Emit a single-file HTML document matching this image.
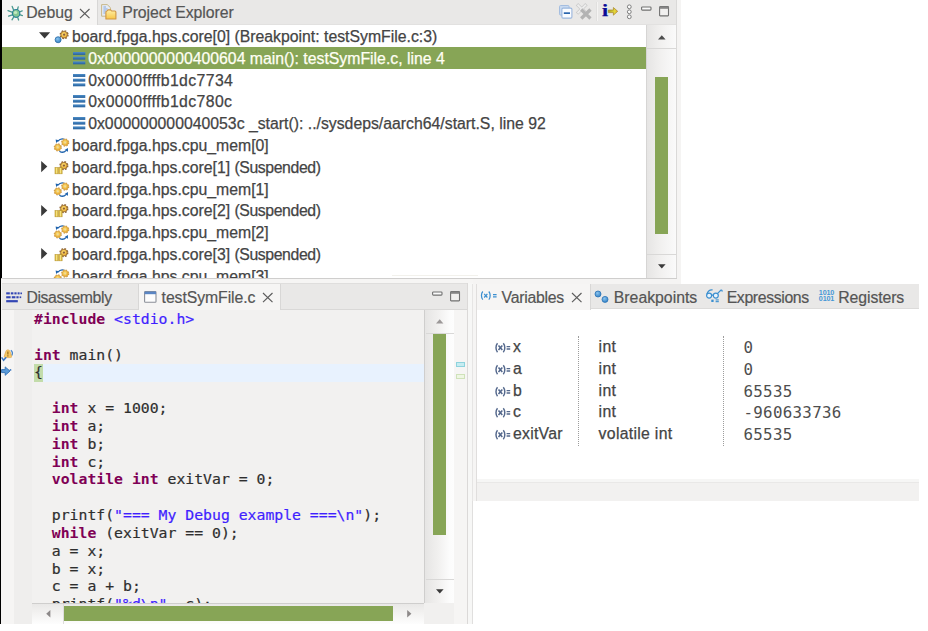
<!DOCTYPE html>
<html>
<head>
<meta charset="utf-8">
<title>Debug</title>
<style>
html,body{margin:0;padding:0;background:#fff;}
body{width:928px;height:631px;position:relative;overflow:hidden;font-family:"Liberation Sans",sans-serif;font-size:15.8px;color:#444;}
.abs,.abs>div{position:absolute;}
.abs{left:0;top:0;}
div{box-sizing:border-box;}
.t{position:absolute;white-space:pre;line-height:20px;height:20px;-webkit-text-stroke:0.25px currentColor;}
.tab{color:#555;-webkit-text-stroke:0.2px #555;}
.sel{color:#fffff4;}
.code{position:absolute;left:34px;white-space:pre;font-family:"DejaVu Sans Mono","Liberation Mono",monospace;font-size:14.79px;line-height:17.83px;height:17.83px;color:#2e2e2e;-webkit-text-stroke:0.2px #2e2e2e;}
.k{color:#7f0055;font-weight:bold;-webkit-text-stroke:0;}
.s{color:#3f1fff;-webkit-text-stroke:0.2px #3f1fff;}
.val{position:absolute;left:743.5px;white-space:pre;font-family:"DejaVu Sans Mono","Liberation Mono",monospace;font-size:15.8px;letter-spacing:0.3px;line-height:20px;height:20px;color:#4e4e4e;}
svg{position:absolute;overflow:visible;}
</style>
</head>
<body>

<svg width="0" height="0" style="left:0;top:0">
<defs>
<linearGradient id="gBar" x1="0" y1="0" x2="0" y2="1"><stop offset="0" stop-color="#4f8fc9"/><stop offset="1" stop-color="#245f9c"/></linearGradient>
<radialGradient id="gGear" cx="0.45" cy="0.4" r="0.6"><stop offset="0" stop-color="#ffe37a"/><stop offset="1" stop-color="#e9a92c"/></radialGradient>
<radialGradient id="gBlue" cx="0.4" cy="0.35" r="0.7"><stop offset="0" stop-color="#8cc4ee"/><stop offset="1" stop-color="#2f7fc4"/></radialGradient>
<linearGradient id="gPause" x1="0" y1="0" x2="1" y2="0"><stop offset="0" stop-color="#d2ad2f"/><stop offset="0.5" stop-color="#f7e484"/><stop offset="1" stop-color="#d2ad2f"/></linearGradient>
<linearGradient id="gFold" x1="0" y1="0" x2="0" y2="1"><stop offset="0" stop-color="#fff0a8"/><stop offset="1" stop-color="#f7c648"/></linearGradient>
<!-- stack frame: three bars, 12.3 x 12 -->
<g id="frame"><rect x="0" y="0" width="12.3" height="2.9" fill="url(#gBar)"/><rect x="0" y="4.7" width="12.3" height="2.9" fill="url(#gBar)"/><rect x="0" y="9.4" width="12.3" height="2.9" fill="url(#gBar)"/></g>
<!-- gear -->
<g id="gear"><circle r="3.85" fill="none" stroke="#8b6233" stroke-width="1.4" stroke-dasharray="1.7 1.324"/>
<circle r="3.3" fill="url(#gGear)" stroke="#94672f" stroke-width="0.8"/><circle r="1.15" fill="#8c5f3c"/></g>
<g id="gear2"><circle r="3.45" fill="none" stroke="#cf9c4a" stroke-width="1.3" stroke-dasharray="1.5 1.21"/>
<circle r="3.05" fill="url(#gGear)" stroke="#d4a043" stroke-width="0.7"/><circle r="0.9" fill="#e9d9a8"/></g>
<!-- core running (thread w/ blue dot); origin = (ix, row centre) -->
<g id="core0"><use href="#gear" x="10.1" y="-1.3"/><circle cx="4.1" cy="3.75" r="3" fill="url(#gBlue)" stroke="#3574ad" stroke-width="0.9"/></g>
<!-- core suspended -->
<g id="coreS"><use href="#gear" x="9.9" y="-1.4"/><rect x="1" y="0.6" width="3.2" height="6.2" fill="url(#gPause)" stroke="#b9962c" stroke-width="0.6"/><rect x="4.9" y="0.6" width="3.2" height="6.2" fill="url(#gPause)" stroke="#b9962c" stroke-width="0.6"/></g>
<!-- cpu mem: two gears with blue arrows -->
<g id="mem"><path d="M3.6 -3.6 Q7 -7.4 10.4 -5.6" fill="none" stroke="#1f63ad" stroke-width="1.3"/><path d="M1.6 -5.4 L5 -4.8 L2.2 -1.9Z" fill="#1f63ad"/>
<path d="M5.4 6.2 Q9 8.6 12 5.6" fill="none" stroke="#1f63ad" stroke-width="1.3"/><path d="M13.9 3 L14 6.8 L10.6 5Z" fill="#1f63ad"/>
<use href="#gear2" x="3.8" y="2.4"/><use href="#gear2" x="11.2" y="-2.4"/></g>
<!-- close x -->
<g id="cx"><path d="M0 0L9.5 9.2M9.5 0L0 9.2" stroke="#5c5c5c" stroke-width="1.15" fill="none"/></g>
<!-- minimize / maximize -->
<g id="mini"><rect x="0.6" y="1.0" width="9.4" height="3.1" rx="0.8" fill="#fafafa" stroke="#707070" stroke-width="1.1"/></g>
<g id="maxi"><rect x="0.6" y="0.6" width="8.9" height="9.3" rx="0.6" fill="#f1f0ef" stroke="#707070" stroke-width="1.1"/><rect x="0.6" y="0.6" width="8.9" height="2.2" fill="#858585"/></g>
<!-- variable icon (x)= -->
<g id="var"><path d="M2.5 0.2C0.5 2.6 0.5 6.8 2.5 9.2M8.3 0.2C10.3 2.6 10.3 6.8 8.3 9.2" fill="none" stroke="#54688c" stroke-width="1.45"/><path d="M3.5 2.5L7.3 7M7.3 2.5L3.5 7" stroke="#54688c" stroke-width="1.6"/><path d="M11.6 3.6H15.2M11.6 6H15.2" stroke="#54688c" stroke-width="1.3"/></g>
</defs></svg>

<div class="abs" id="top">
<div style="left:0;top:0;width:680.7px;height:283.5px;background:#f5f4f3;"></div>
<div style="left:2px;top:0;width:674.4px;height:24.5px;background:#e9e8e7;"></div>
<div style="left:2px;top:0;width:95.5px;height:25px;background:#f6f5f4;border-right:1px solid #d8d7d6;"></div>
<div style="left:97.5px;top:23.8px;width:579px;height:1px;background:#e2e1e0;"></div>
<div style="left:2px;top:25px;width:644.2px;height:253px;background:#fff;"></div>
<div style="left:2px;top:47px;width:644.2px;height:21.7px;background:#87a556;"></div>
<div style="left:646.2px;top:25px;width:30.2px;height:253px;background:linear-gradient(90deg,#e6e5e4 0%,#f1f0ef 45%,#fafafa 100%);border-left:1px solid #d6d5d4;"></div>
<div style="left:647px;top:48px;width:29px;height:1px;background:#d9d8d7;"></div>
<div style="left:647px;top:254px;width:29px;height:1px;background:#d9d8d7;"></div>
<div style="left:655.1px;top:77px;width:12.9px;height:157px;background:#87a556;"></div>
<div style="left:676px;top:0;width:1px;height:279px;background:#dad9d8;"></div>
<div style="left:0;top:277.8px;width:677px;height:1px;background:#cfcecd;"></div>
<div style="left:392px;top:275px;width:86px;height:1px;background:#f2f1ec;"></div>
</div>
<div class="t tab" style="left:26.2px;top:3.23px;">Debug</div>
<div class="t tab" style="left:122.2px;top:3.23px;letter-spacing:-0.06px;">Project Explorer</div>
<svg style="left:80.3px;top:8.7px" width="10" height="10"><use href="#cx"/></svg>
<svg style="left:6.5px;top:5px" width="16" height="16" viewBox="0 0 16 16">
<g stroke="#4a9990" stroke-width="1.3" stroke-linecap="round" fill="none">
<path d="M6.8 5.4L5.2 1.4M10.4 5L11.2 1.8M5.6 7.4L1 5.6M12.4 7L15.2 5.8M5.4 9.8L1.6 11.2M12.6 9.6L15.4 10.6M6.8 11.8L5 14.8M10.6 12L11.6 15"/></g>
<ellipse cx="9.1" cy="8.4" rx="3.7" ry="3.9" fill="#84c793" stroke="#2c8298" stroke-width="1.2"/>
<ellipse cx="8.5" cy="7.4" rx="1.7" ry="1.5" fill="#c3e8c2"/>
</svg>
<svg style="left:101px;top:4.2px" width="16" height="16" viewBox="0 0 16 16">
<path d="M0.6 0.6H6.2L9.4 3.6V12.2H0.6Z" fill="#e4ebf6" stroke="#c9b98a" stroke-width="1"/>
<path d="M2.4 3H5M2.4 5H6.6M2.4 7H5.6M2.4 9H4.6" stroke="#86a7dc" stroke-width="1"/>
<path d="M4.9 15V8.2Q4.9 7 6 7L7 5.9H9.6L10.6 7H13.8Q14.9 7 14.9 8.2V15Z" fill="url(#gFold)" stroke="#cf9544" stroke-width="1.1" stroke-linejoin="round"/>
</svg>
<svg style="left:559px;top:4.6px" width="14" height="14" viewBox="0 0 14 14">
<rect x="0.5" y="0.5" width="9.6" height="9.6" rx="1.2" fill="#c9daf0" stroke="#a4bde0" stroke-width="1"/>
<rect x="2.9" y="3.1" width="10" height="10" rx="1.2" fill="#fafcff" stroke="#9ab6dd" stroke-width="1.1"/>
<rect x="4.8" y="7.3" width="6.2" height="1.7" fill="#2b66ad"/>
</svg>
<svg style="left:575.8px;top:3.4px" width="16" height="16" viewBox="0 0 16 16">
<path d="M2.2 2.4L9.3 9.4M9.3 2.4L2.2 9.4" stroke="#cbcbcb" stroke-width="3.4" stroke-linecap="square"/>
<path d="M2.2 2.4L9.3 9.4M9.3 2.4L2.2 9.4" stroke="#ededed" stroke-width="1.9" stroke-linecap="square"/>
<path d="M6.4 7.7L13.3 14.4M13.3 7.7L6.4 14.4" stroke="#b3b3b3" stroke-width="3.3" stroke-linecap="square"/>
</svg>
<div style="position:absolute;left:597.3px;top:2px;width:1px;height:19px;background:#f5f4f3;"></div>
<div style="position:absolute;left:596.3px;top:2px;width:1px;height:19px;background:#e1e0df;"></div>
<div class="t" style="left:602.4px;top:0.9px;font-family:'Liberation Serif',serif;font-weight:bold;font-size:16.9px;color:#0a0a96;line-height:20px;transform:scaleX(1.3);transform-origin:0 0;">i</div>
<svg style="left:607.8px;top:6.6px" width="10" height="9" viewBox="0 0 10 9">
<defs><linearGradient id="gArr" x1="0" y1="0" x2="1" y2="0"><stop offset="0" stop-color="#a9a720"/><stop offset="0.7" stop-color="#e6d93a"/><stop offset="1" stop-color="#d9a02c"/></linearGradient></defs>
<path d="M0.3 3H5.4V0.5L9.7 4.3L5.4 8.2V5.6H0.3Z" fill="url(#gArr)" stroke="#a8852a" stroke-width="0.7" stroke-linejoin="round"/></svg>
<svg style="left:625.5px;top:3.8px" width="7" height="16" viewBox="0 0 7 16">
<g fill="#fcfcfc" stroke="#7d7d7d" stroke-width="1"><circle cx="3.3" cy="2.8" r="1.9"/><circle cx="3.3" cy="7.8" r="1.9"/><circle cx="3.3" cy="12.8" r="1.9"/></g></svg>
<svg style="left:640.9px;top:6px" width="11" height="5"><use href="#mini"/></svg>
<svg style="left:659px;top:6px" width="11" height="11"><use href="#maxi"/></svg>
<svg style="left:657.6px;top:34.9px" width="8" height="5" viewBox="0 0 8 5"><path d="M0 4.6L3.8 0.2L7.6 4.6Z" fill="#4d4d4d"/></svg>
<svg style="left:657.7px;top:263.6px" width="8" height="5" viewBox="0 0 8 5"><path d="M0 0.2L3.8 4.6L7.6 0.2Z" fill="#3a3a3a"/></svg>
<div style="position:absolute;left:2px;top:25px;width:644.2px;height:252.8px;overflow:hidden;">
<div class="t " style="left:70.0px;top:1.98px;">board.fpga.hps.core[0] (Breakpoint: testSymFile.c:3)</div>
<svg style="left:52.2px;top:10.90px" width="1" height="1"><use href="#core0"/></svg>
<svg style="left:36.8px;top:7.30px" width="12" height="7" viewBox="0 0 12 7"><path d="M0 0.2H11.2L5.6 6.6Z" fill="#3a3a3a"/></svg>
<div class="t sel" style="left:86.2px;top:23.78px;">0x0000000000400604 main(): testSymFile.c, line 4</div>
<svg style="left:70.5px;top:26.80px" width="13" height="13"><use href="#frame"/></svg>
<div class="t " style="left:86.2px;top:45.58px;letter-spacing:0.4px;">0x0000ffffb1dc7734</div>
<svg style="left:70.5px;top:48.60px" width="13" height="13"><use href="#frame"/></svg>
<div class="t " style="left:86.2px;top:67.38px;letter-spacing:0.4px;">0x0000ffffb1dc780c</div>
<svg style="left:70.5px;top:70.40px" width="13" height="13"><use href="#frame"/></svg>
<div class="t " style="left:86.2px;top:89.18px;">0x000000000040053c _start(): ../sysdeps/aarch64/start.S, line 92</div>
<svg style="left:70.5px;top:92.20px" width="13" height="13"><use href="#frame"/></svg>
<div class="t " style="left:70.0px;top:110.98px;">board.fpga.hps.cpu_mem[0]</div>
<svg style="left:52.2px;top:119.90px" width="1" height="1"><use href="#mem"/></svg>
<div class="t " style="left:70.0px;top:132.78px;">board.fpga.hps.core[1] <span style="letter-spacing:-0.4px">(Suspended)</span></div>
<svg style="left:52.2px;top:141.70px" width="1" height="1"><use href="#coreS"/></svg>
<svg style="left:39.2px;top:136.00px" width="7" height="12" viewBox="0 0 7 12"><path d="M0.2 0L6.3 5.6L0.2 11.2Z" fill="#3a3a3a"/></svg>
<div class="t " style="left:70.0px;top:154.58px;">board.fpga.hps.cpu_mem[1]</div>
<svg style="left:52.2px;top:163.50px" width="1" height="1"><use href="#mem"/></svg>
<div class="t " style="left:70.0px;top:176.38px;">board.fpga.hps.core[2] <span style="letter-spacing:-0.4px">(Suspended)</span></div>
<svg style="left:52.2px;top:185.30px" width="1" height="1"><use href="#coreS"/></svg>
<svg style="left:39.2px;top:179.60px" width="7" height="12" viewBox="0 0 7 12"><path d="M0.2 0L6.3 5.6L0.2 11.2Z" fill="#3a3a3a"/></svg>
<div class="t " style="left:70.0px;top:198.18px;">board.fpga.hps.cpu_mem[2]</div>
<svg style="left:52.2px;top:207.10px" width="1" height="1"><use href="#mem"/></svg>
<div class="t " style="left:70.0px;top:219.98px;">board.fpga.hps.core[3] <span style="letter-spacing:-0.4px">(Suspended)</span></div>
<svg style="left:52.2px;top:228.90px" width="1" height="1"><use href="#coreS"/></svg>
<svg style="left:39.2px;top:223.20px" width="7" height="12" viewBox="0 0 7 12"><path d="M0.2 0L6.3 5.6L0.2 11.2Z" fill="#3a3a3a"/></svg>
<div class="t " style="left:70.0px;top:241.78px;">board.fpga.hps.cpu_mem[3]</div>
<svg style="left:52.2px;top:250.70px" width="1" height="1"><use href="#mem"/></svg>
</div>
<div class="abs" id="bl">
<div style="left:0;top:278.6px;width:472.7px;height:345px;background:#f6f5f4;"></div>
<div style="left:2px;top:283px;width:465.6px;height:26.4px;background:#e9e8e7;"></div>
<div style="left:2px;top:283px;width:465.6px;height:1px;background:#dfdedd;"></div>
<div style="left:137.5px;top:283.6px;width:143.5px;height:26px;background:#f6f5f4;border-left:1px solid #d8d7d6;border-right:1px solid #d8d7d6;"></div>
<div style="left:2px;top:308.6px;width:135.5px;height:1px;background:#d9d8d7;"></div>
<div style="left:281px;top:308.6px;width:186.6px;height:1px;background:#d9d8d7;"></div>
<div style="left:2px;top:309.6px;width:422.4px;height:293.6px;background:#f2f1f0;"></div>
<div style="left:2px;top:309.6px;width:12px;height:314px;background:#f6f5f4;"></div>
<div style="left:14px;top:309.6px;width:18px;height:314px;background:#efeeed;"></div>
<div style="left:34px;top:363.8px;width:390.4px;height:17.8px;background:#e8f2fe;"></div>
<div style="left:33.8px;top:363.8px;width:9.2px;height:17.8px;background:#c3dcaa;"></div>
<div style="left:424.2px;top:309.6px;width:29.8px;height:293.6px;background:linear-gradient(90deg,#e6e5e4 0%,#f1f0ef 45%,#fcfcfc 85%,#fdfdfd 100%);border-left:1.3px solid #cfcecd;"></div>
<div style="left:425.5px;top:333px;width:28.5px;height:1px;background:#d9d8d7;"></div>
<div style="left:425.5px;top:579.3px;width:28.5px;height:1px;background:#d9d8d7;"></div>
<div style="left:433.3px;top:334px;width:12.8px;height:200.5px;background:#87a556;"></div>
<div style="left:456px;top:361.8px;width:9.2px;height:4.9px;background:#c6ecf1;border:1px solid #8ed3dd;"></div>
<div style="left:456px;top:374.4px;width:9.2px;height:4.9px;background:#eef6e3;border:1px solid #cfe2b9;"></div>
<div style="left:32px;top:603.2px;width:392.4px;height:20.4px;background:linear-gradient(180deg,#e9e8e7 0%,#f3f2f1 45%,#fdfdfd 100%);border-top:1px solid #cfcecd;"></div>
<div style="left:63px;top:604px;width:1px;height:19.6px;background:#dddcdb;"></div>
<div style="left:63.6px;top:606.2px;width:329.2px;height:15.2px;background:#87a556;"></div>
<div style="left:424.4px;top:603.2px;width:29.6px;height:20.4px;background:#f1f0ef;"></div>
<div style="left:467.4px;top:283px;width:1px;height:340.6px;background:#dbd9d8;"></div>
<div style="left:468.4px;top:283px;width:4.3px;height:340.6px;background:#f7f7f6;"></div>
<div style="left:471.7px;top:501px;width:1px;height:122.6px;background:#e0dfde;"></div>
</div>
<svg style="left:435.9px;top:318.9px" width="8" height="5" viewBox="0 0 8 5"><path d="M0 4.4L3.7 0.2L7.4 4.4Z" fill="#9c9898"/></svg>
<svg style="left:435.7px;top:589.2px" width="8" height="5" viewBox="0 0 8 5"><path d="M0 0.2L3.8 4.6L7.6 0.2Z" fill="#3a3a3a"/></svg>
<svg style="left:45.6px;top:609.6px" width="5" height="8" viewBox="0 0 5 8"><path d="M4.4 0L0.2 3.7L4.4 7.4Z" fill="#8d8989"/></svg>
<svg style="left:406.6px;top:610.2px" width="5" height="8" viewBox="0 0 5 8"><path d="M0.2 0L4.4 3.7L0.2 7.4Z" fill="#8d8989"/></svg>
<div class="t tab" style="left:26.4px;top:288.23px;letter-spacing:-0.39px;">Disassembly</div>
<div class="t tab" style="left:161.6px;top:288.23px;letter-spacing:-0.08px;">testSymFile.c</div>
<svg style="left:263.2px;top:292.6px" width="10" height="10"><use href="#cx"/></svg>
<svg style="left:432px;top:291.2px" width="11" height="5"><use href="#mini"/></svg>
<svg style="left:449.8px;top:291.2px" width="11" height="11"><use href="#maxi"/></svg>
<svg style="left:6px;top:292px" width="17" height="11" viewBox="0 0 17 11">
<g fill="#3346b4"><rect x="0.2" y="0.3" width="3.6" height="2.1"/><rect x="4.8" y="0.3" width="2.6" height="2.1"/><rect x="8.4" y="0.3" width="2.2" height="2.1"/><rect x="11.6" y="0.3" width="2" height="2.1"/><rect x="14.4" y="0.5" width="1.6" height="1.7"/>
<rect x="0.2" y="4.2" width="4.4" height="2.1"/><rect x="5.8" y="4.2" width="3.6" height="2.1"/><rect x="10.4" y="4.2" width="2.2" height="2.1"/><rect x="13.6" y="4.4" width="1.6" height="1.7"/>
<rect x="0.2" y="8.1" width="11.6" height="2.2"/></g></svg>
<svg style="left:143.6px;top:291px" width="13" height="12" viewBox="0 0 13 12">
<rect x="0.6" y="0.6" width="11.4" height="10.6" rx="0.8" fill="#fdfdfd" stroke="#8a8f98" stroke-width="1.1"/><rect x="0.6" y="0.6" width="11.4" height="2.6" fill="#5b86c4"/></svg>
<svg style="left:0px;top:344px" width="14" height="40" viewBox="0 0 14 40">
<path d="M10.9 6.2Q13.6 8.6 11.6 11.6" fill="none" stroke="#4a86c8" stroke-width="1.3"/>
<path d="M7.9 5.8Q9.6 5.8 10.2 8L11.5 12.2Q11.9 13.6 10.4 13.6H5.4Q3.9 13.6 4.3 12.2L5.6 8Q6.2 5.8 7.9 5.8Z" fill="#f5c866" stroke="#e0a84a" stroke-width="0.7"/>
<path d="M7.9 7.6V10.4M7.9 11.3V12.5" stroke="#9a6a18" stroke-width="1.2"/>
<path d="M1.6 13.4L3.6 16.2L6.2 13.2" fill="none" stroke="#3f7ac2" stroke-width="1.5"/>
<path d="M1.6 25.6H5.2V22.9L10 27.1L5.2 31.3V28.6H1.6Z" fill="#5b9bd8" stroke="#2f6fb4" stroke-width="0.9" stroke-linejoin="round"/>
<circle cx="10.5" cy="25.9" r="0.9" fill="#3f7ac2"/>
</svg>
<div style="position:absolute;left:32px;top:309.6px;width:392.4px;height:293.6px;overflow:hidden;">
<div class="code" style="left:2px;top:0.30px;"><span class="k">#include</span> <span class="s">&lt;stdio.h&gt;</span></div>
<div class="code" style="left:2px;top:18.13px;"></div>
<div class="code" style="left:2px;top:35.96px;"><span class="k">int</span> main()</div>
<div class="code" style="left:2px;top:53.79px;">{</div>
<div class="code" style="left:2px;top:71.62px;"></div>
<div class="code" style="left:2px;top:89.45px;">  <span class="k">int</span> x = 1000;</div>
<div class="code" style="left:2px;top:107.28px;">  <span class="k">int</span> a;</div>
<div class="code" style="left:2px;top:125.11px;">  <span class="k">int</span> b;</div>
<div class="code" style="left:2px;top:142.94px;">  <span class="k">int</span> c;</div>
<div class="code" style="left:2px;top:160.77px;">  <span class="k">volatile</span> <span class="k">int</span> exitVar = 0;</div>
<div class="code" style="left:2px;top:178.60px;"></div>
<div class="code" style="left:2px;top:196.43px;">  printf(<span class="s">"=== My Debug example ===\n"</span>);</div>
<div class="code" style="left:2px;top:214.26px;">  <span class="k">while</span> (exitVar == 0);</div>
<div class="code" style="left:2px;top:232.09px;">  a = x;</div>
<div class="code" style="left:2px;top:249.92px;">  b = x;</div>
<div class="code" style="left:2px;top:267.75px;">  c = a + b;</div>
<div class="code" style="left:2px;top:285.58px;">  printf(<span class="s">"%d\n"</span>, c);</div>
</div>
<div class="abs" id="rt">
<div style="left:472px;top:283.5px;width:446.7px;height:217.5px;background:#fff;"></div>
<div style="left:471.6px;top:283.5px;width:5.2px;height:217.5px;background:#f6f5f4;border-left:1px solid #e6e5e4;border-right:1px solid #e0dedd;"></div>
<div style="left:476.8px;top:283.5px;width:441.9px;height:25.6px;background:#e9e8e7;border-bottom:1px solid #dcdbda;"></div>
<div style="left:476.8px;top:283.5px;width:113.8px;height:26px;background:#f6f5f4;border-right:1px solid #d8d7d6;"></div>
<div style="left:476.8px;top:479.4px;width:441.9px;height:21.6px;background:#f2f1f0;"></div>
<div style="left:476.8px;top:479.4px;width:441.9px;height:2.4px;background:#f6f6f5;"></div>
<div style="left:476.8px;top:481.9px;width:441.9px;height:1.3px;background:#e9e8e7;"></div>
<div style="left:578.3px;top:336.3px;width:0;height:109.4px;border-left:1px dotted #9c9c9c;"></div>
<div style="left:723.3px;top:336.3px;width:0;height:109.4px;border-left:1px dotted #9c9c9c;"></div>
</div>
<div class="t tab" style="left:501.6px;top:287.93px;letter-spacing:-0.27px;">Variables</div>
<svg style="left:572.4px;top:292.6px" width="10" height="10"><use href="#cx"/></svg>
<div class="t tab" style="left:613.8px;top:287.93px;">Breakpoints</div>
<div class="t tab" style="left:726.7px;top:287.73px;letter-spacing:-0.36px;">Expressions</div>
<div class="t tab" style="left:838.3px;top:287.73px;letter-spacing:-0.1px;">Registers</div>
<svg style="left:480.4px;top:291.2px" width="18" height="10" viewBox="0 0 18 10">
<g fill="none" stroke="#3b8fd0" stroke-width="1.25"><path d="M2.8 0.5C1 2.6 1 6.6 2.8 8.7M8.8 0.5C10.6 2.6 10.6 6.6 8.8 8.7"/><path d="M4.2 2.9L7.4 6.5M7.4 2.9L4.2 6.5"/><path d="M13 3.7H16.6M13 5.9H16.6"/></g></svg>
<svg style="left:594px;top:289.6px" width="16" height="14" viewBox="0 0 16 14">
<circle cx="4" cy="4" r="3" fill="url(#gBlue)" stroke="#2c73b6" stroke-width="0.8"/><circle cx="11" cy="9.4" r="3" fill="url(#gBlue)" stroke="#2c73b6" stroke-width="0.8"/></svg>
<svg style="left:706px;top:289.4px" width="17" height="14" viewBox="0 0 17 14">
<g fill="#e8f3fc" stroke="#3b8fd0" stroke-width="1.2"><circle cx="3.1" cy="6.6" r="2.5"/><circle cx="9.8" cy="6.6" r="2.5"/></g>
<g fill="none" stroke="#3b8fd0" stroke-width="1.2"><path d="M5.6 6.2H7.3M0.9 5.2Q2.2 0.4 6.6 0.9M11.4 4.6L15 1.1Q16.4 0.6 16 2.6"/></g>
<g fill="#3b8fd0"><rect x="5.3" y="10.6" width="2.3" height="2.4"/><rect x="9.6" y="10.4" width="3.2" height="1.1"/><rect x="9.6" y="12.1" width="3.2" height="1.1"/></g></svg>
<div class="t" style="left:818.8px;top:289.9px;font-size:7.2px;line-height:6.5px;height:14px;color:#4597d6;font-weight:bold;letter-spacing:-0.15px;-webkit-text-stroke:0;">1010<br>0101</div>
<svg style="left:495.2px;top:343.00px" width="16" height="10"><use href="#var"/></svg>
<div class="t " style="left:513px;top:337.13px;">x</div>
<div class="t " style="left:598.6px;top:337.13px;letter-spacing:0.3px;">int</div>
<div class="val" style="top:338.00px;">0</div>
<svg style="left:495.2px;top:364.78px" width="16" height="10"><use href="#var"/></svg>
<div class="t " style="left:513px;top:358.91px;">a</div>
<div class="t " style="left:598.6px;top:358.91px;letter-spacing:0.3px;">int</div>
<div class="val" style="top:359.78px;">0</div>
<svg style="left:495.2px;top:386.56px" width="16" height="10"><use href="#var"/></svg>
<div class="t " style="left:513px;top:380.69px;">b</div>
<div class="t " style="left:598.6px;top:380.69px;letter-spacing:0.3px;">int</div>
<div class="val" style="top:381.56px;">65535</div>
<svg style="left:495.2px;top:408.34px" width="16" height="10"><use href="#var"/></svg>
<div class="t " style="left:513px;top:402.47px;">c</div>
<div class="t " style="left:598.6px;top:402.47px;letter-spacing:0.3px;">int</div>
<div class="val" style="top:403.34px;">-960633736</div>
<svg style="left:495.2px;top:430.12px" width="16" height="10"><use href="#var"/></svg>
<div class="t " style="left:513px;top:424.25px;letter-spacing:0.25px;">exitVar</div>
<div class="t " style="left:598.6px;top:424.25px;letter-spacing:0.3px;">volatile int</div>
<div class="val" style="top:425.12px;">65535</div>
<div style="position:absolute;left:0;top:0;width:2.1px;height:278px;background:#000;"></div>
<div style="position:absolute;left:0;top:278px;width:1.35px;height:345.6px;background:#000;"></div>
</body>
</html>
